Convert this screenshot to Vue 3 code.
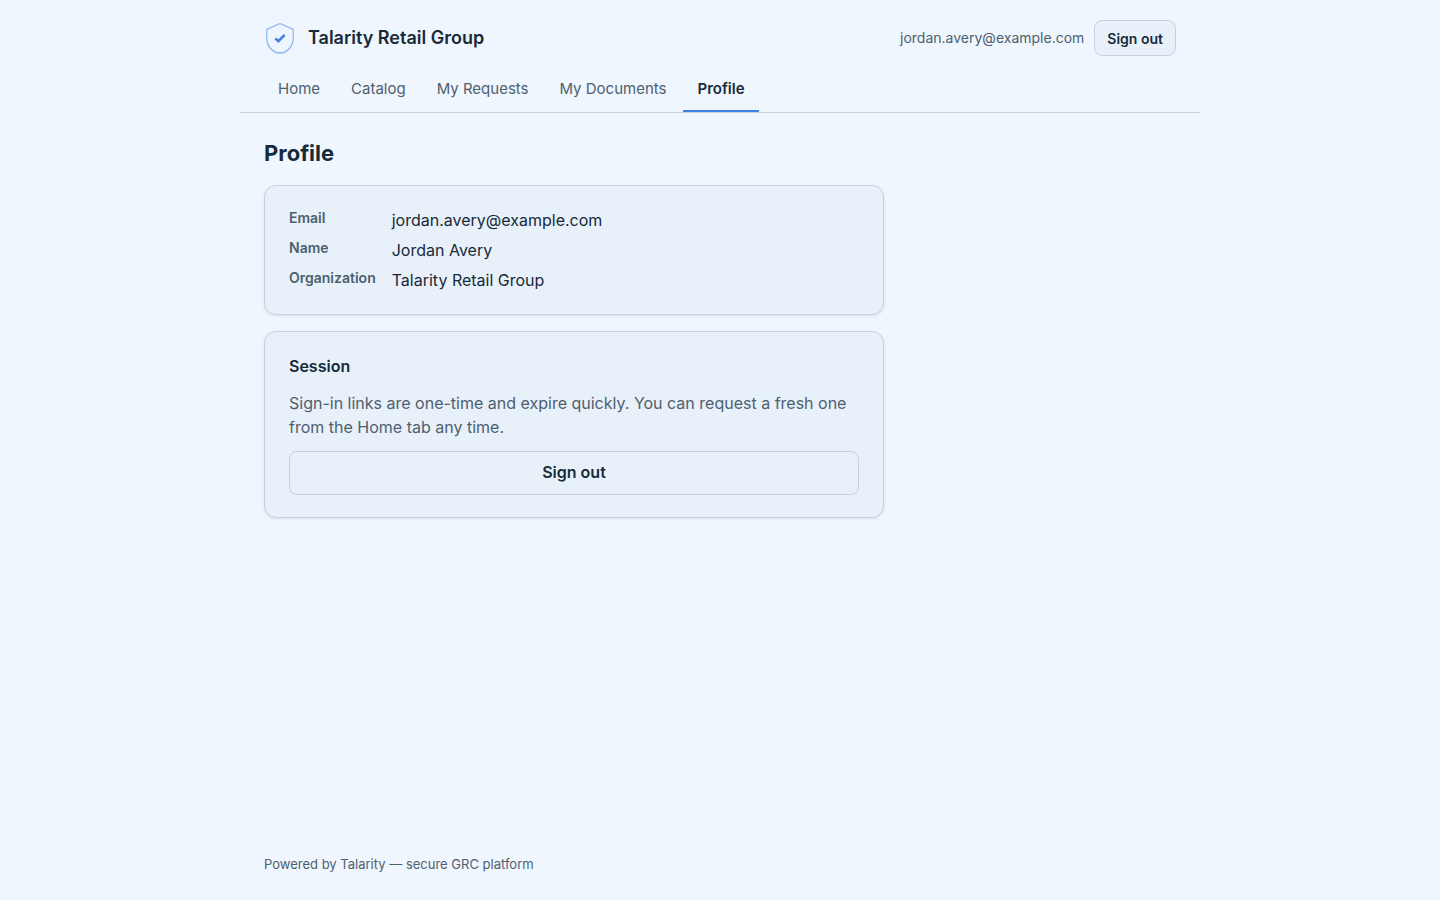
<script setup>
const tabs = ['Home', 'Catalog', 'My Requests', 'My Documents', 'Profile']
const current = 'Profile'
const details = [
  { label: 'Email', value: 'jordan.avery@example.com' },
  { label: 'Name', value: 'Jordan Avery' },
  { label: 'Organization', value: 'Talarity Retail Group' },
]
</script>

<template>
  <div class="portal">
    <header class="topbar">
      <div class="brand">
        <svg class="logo" viewBox="0 0 32 32" aria-hidden="true">
          <path d="M16 1.500 L29.300 7.300 V16 C29.300 24 23.500 31 16 31 C8.500 31 2.700 24 2.700 16 V7.300 Z" fill="#eef5fe" stroke="#8fb6f3" stroke-width="1.300" stroke-linejoin="round" />
          <path d="M11.300 16.300 L14.400 19.200 L20.600 13" fill="none" stroke="#3f82e6" stroke-width="2.500" />
        </svg>
        <span class="brand-name">Talarity Retail Group</span>
      </div>
      <div class="account">
        <span class="account-email">jordan.avery@example.com</span>
        <button type="button" class="btn btn-small">Sign out</button>
      </div>
    </header>
    <nav class="tabs">
      <a v-for="tab in tabs" :key="tab" href="#" class="tab" :class="{ active: tab === current }">{{ tab }}</a>
    </nav>
    <main class="content">
      <h1>Profile</h1>
      <section class="card">
        <dl class="details">
          <template v-for="d in details" :key="d.label">
            <dt>{{ d.label }}</dt>
            <dd>{{ d.value }}</dd>
          </template>
        </dl>
      </section>
      <section class="card">
        <h2>Session</h2>
        <p>Sign-in links are one-time and expire quickly. You can request a fresh one from the Home tab any time.</p>
        <button type="button" class="btn btn-block">Sign out</button>
      </section>
    </main>
    <footer class="footer">Powered by Talarity — secure GRC platform</footer>
  </div>
</template>

<style>
body {
  margin: 0;
  background: #f0f6fd;
}
</style>

<style scoped>
.portal {
  box-sizing: border-box;
  display: flex;
  flex-direction: column;
  max-width: 960px;
  min-height: 100vh;
  margin: 0 auto;
  font-family: Inter, "Liberation Sans", sans-serif;
  font-size: 16px;
  line-height: 24px;
  color: #172a3a;
}
.topbar {
  display: flex;
  align-items: center;
  justify-content: space-between;
  padding: 20px 24px 12px;
}
.brand {
  display: flex;
  align-items: center;
  gap: 12px;
}
.logo {
  width: 32px;
  height: 32px;
}
.brand-name {
  font-size: 18px;
  font-weight: 600;
}
.account {
  display: flex;
  align-items: center;
  gap: 10px;
}
.account-email {
  font-size: 14px;
  color: #4d6070;
}
.btn {
  box-sizing: border-box;
  font-family: inherit;
  font-weight: 600;
  color: #172a3a;
  background: #e8f1fa;
  border: 1px solid #c5d2df;
  border-radius: 8px;
  cursor: pointer;
}
.btn-small {
  height: 36px;
  padding: 0 12px;
  font-size: 14px;
}
.btn-block {
  display: block;
  width: 100%;
  height: 44px;
  margin-top: 12px;
  padding: 0 16px 2px;
  font-size: 16px;
}
.tabs {
  display: flex;
  gap: 3px;
  padding: 0 24px;
  border-bottom: 1px solid #c5d2df;
}
.tab {
  padding: 9px 14px;
  border-bottom: 2px solid transparent;
  font-size: 15px;
  color: #4d6070;
  text-decoration: none;
}
.tab.active {
  font-weight: 600;
  color: #172a3a;
  border-bottom-color: #3f82e6;
}
.content {
  flex: 1;
  padding: 24px;
}
h1 {
  margin: 0 0 16px;
  font-size: 22px;
  line-height: 32px;
  font-weight: 700;
}
.card {
  box-sizing: border-box;
  max-width: 620px;
  margin-bottom: 16px;
  padding: 22px 24px;
  background: #e8f0fa;
  border: 1px solid #c5d2df;
  border-radius: 12px;
  box-shadow: 0 1px 3px rgba(22, 38, 58, 0.1);
}
.details {
  display: grid;
  grid-template-columns: auto 1fr;
  gap: 6px 16px;
  margin: 0;
}
dt {
  font-size: 14px;
  line-height: 20px;
  font-weight: 600;
  color: #4d6070;
}
dd {
  margin: 0;
}
h2 {
  margin: 0 0 13px;
  font-size: 16px;
  line-height: 24px;
  font-weight: 600;
}
p {
  margin: 0;
  color: #4d6070;
}
.footer {
  padding: 24px;
  font-size: 13px;
  color: #4d6070;
}
</style>
